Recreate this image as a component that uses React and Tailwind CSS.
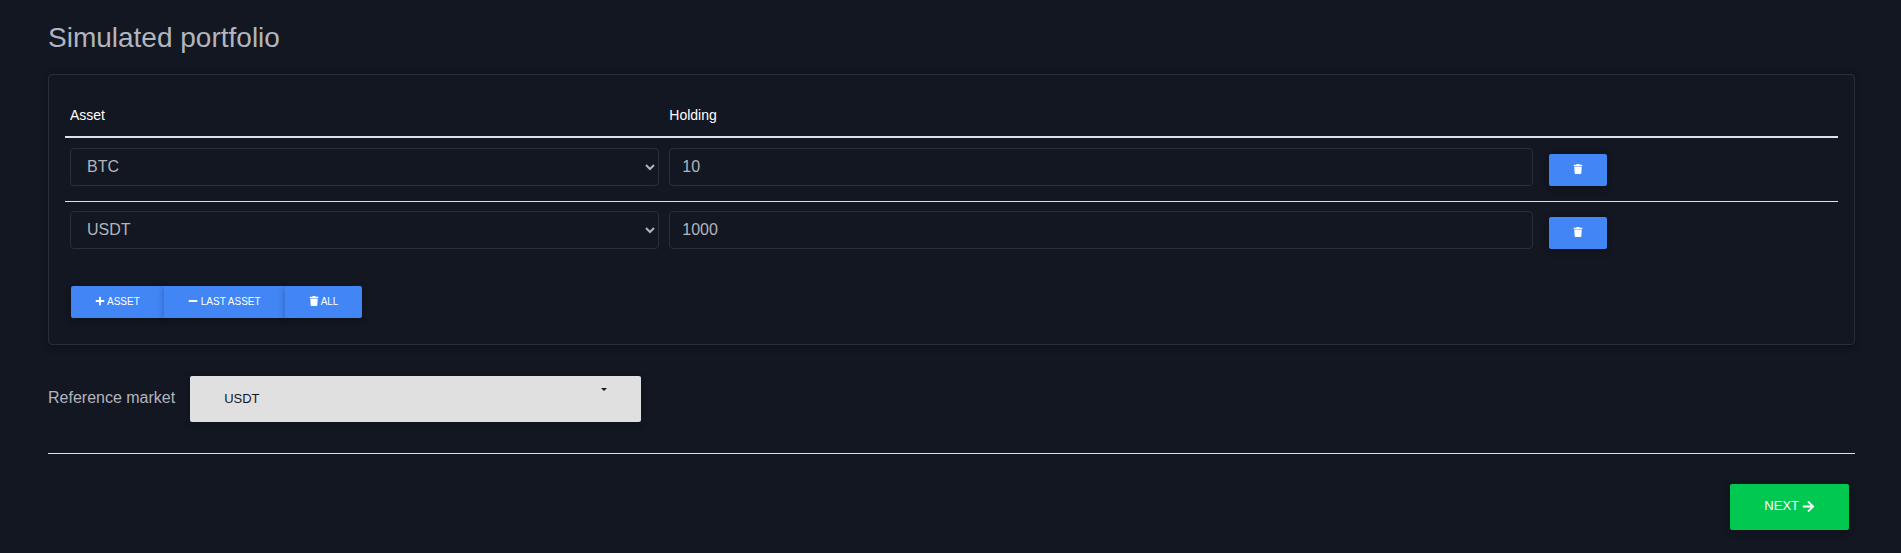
import React, { useState } from 'react';
import { FaArrowRight, FaMinus, FaPlus, FaTrash } from 'react-icons/fa';

const SYMBOLS = ['BTC', 'ETH', 'USDT'];

const RAISED = 'shadow-[0_2px_5px_rgba(0,0,0,0.16),0_2px_10px_rgba(0,0,0,0.12)]';

const SmallButton = ({ className = '', children, ...props }) => (
    <button
        type="button"
        className={`${RAISED} flex h-8 items-center justify-center bg-[#4285f4] px-6 pb-0.5 text-[10px] uppercase text-white hover:bg-[#5a95f5] ${className}`}
        {...props}
    >
        {children}
    </button>
);

const AssetRow = ({ row, first, onChange, onRemove }) => {
    const cell = `h-[63px] border-t px-[5px] pt-[9px] align-top ${
        first ? 'border-transparent' : 'border-[#dee2e6]'
    }`;

    return (
        <tr>
            <td className={cell}>
                <select
                    aria-label="Asset"
                    value={row.asset}
                    onChange={(e) => onChange({ ...row, asset: e.target.value })}
                    className="block h-[38px] w-full rounded border border-[#2a2e39] bg-[#131722] px-3 pb-0.5 text-base text-[#b2b5be]"
                >
                    {SYMBOLS.map((symbol) => (
                        <option key={symbol}>{symbol}</option>
                    ))}
                </select>
            </td>
            <td className={cell}>
                <input
                    aria-label="Holding"
                    type="text"
                    inputMode="decimal"
                    value={row.holding}
                    onChange={(e) => onChange({ ...row, holding: e.target.value })}
                    className="block h-[38px] w-full rounded border border-[#2a2e39] bg-[#131722] px-3 text-base text-[#b2b5be]"
                />
            </td>
            <td className={cell}>
                <SmallButton aria-label="Remove asset" className="mx-1.5 mt-1.5 rounded-xs" onClick={onRemove}>
                    <FaTrash />
                </SmallButton>
            </td>
        </tr>
    );
};

const App = () => {
    const [rows, setRows] = useState([
        { id: 1, asset: 'BTC', holding: '10' },
        { id: 2, asset: 'USDT', holding: '1000' }
    ]);
    const [market, setMarket] = useState('USDT');

    const addRow = () => {
        setRows(prev => [...prev, { id: Date.now(), asset: 'BTC', holding: '0' }]);
    };

    const updateRow = (next) => {
        setRows(prev => prev.map(row => (row.id === next.id ? next : row)));
    };

    return (
        <div className="min-h-screen bg-[#131722] pt-[21px] pr-[46px] pb-5 pl-12 font-['Liberation_Sans',Arial,sans-serif] text-base text-[#b2b5be]">
            <h3 className="text-[28px] leading-[34px]">Simulated portfolio</h3>

            <div className={`${RAISED} mt-[19px] rounded border border-[#2a2e39] px-4 pt-[30px] pb-[26px]`}>
                <table className="w-full table-fixed border-separate border-spacing-0">
                    <thead>
                        <tr className="text-left text-sm text-white">
                            <th className="w-[33.8%] border-b-2 border-[#dee2e6] px-[5px] pb-[11px] font-normal">Asset</th>
                            <th className="w-[49.3%] border-b-2 border-[#dee2e6] px-[5px] pb-[11px] font-normal">Holding</th>
                            <th className="w-[16.9%] border-b-2 border-[#dee2e6]" />
                        </tr>
                    </thead>
                    <tbody>
                        {rows.map((row, i) => (
                            <AssetRow
                                key={row.id}
                                row={row}
                                first={i === 0}
                                onChange={updateRow}
                                onRemove={() => setRows(prev => prev.filter(r => r.id !== row.id))}
                            />
                        ))}
                    </tbody>
                </table>

                <div className="mx-1.5 mt-[22px] flex">
                    <SmallButton className="gap-0.5 rounded-l-xs" onClick={addRow}>
                        <FaPlus /> Asset
                    </SmallButton>
                    <SmallButton className="gap-[3px]" onClick={() => setRows(prev => prev.slice(0, -1))}>
                        <FaMinus /> Last asset
                    </SmallButton>
                    <SmallButton className="gap-0.5 rounded-r-xs" onClick={() => setRows([])}>
                        <FaTrash /> All
                    </SmallButton>
                </div>
            </div>

            <div className="mt-[31px] flex items-center gap-[15px]">
                <label htmlFor="market" className="pb-0.5">Reference market</label>
                <div className="relative">
                    <select
                        id="market"
                        value={market}
                        onChange={(e) => setMarket(e.target.value)}
                        className={`${RAISED} block h-[46px] w-[451px] appearance-none rounded-xs bg-[#e0e0e0] px-[34px] text-[13px] text-[#131722]`}
                    >
                        {SYMBOLS.map((symbol) => (
                            <option key={symbol}>{symbol}</option>
                        ))}
                    </select>
                    <span className="pointer-events-none absolute top-3 right-[34px] border-x-[3px] border-t-[3px] border-x-transparent border-t-[#131722]" />
                </div>
            </div>

            <hr className="mt-[31px] border-[#dee2e6]" />

            <div className="mt-[30px] mr-1.5 flex justify-end">
                <button
                    type="button"
                    className={`${RAISED} flex h-[46px] items-center gap-[3px] rounded-xs bg-[#00c851] px-[34px] pb-0.5 text-[13px] uppercase text-white hover:bg-[#00d255]`}
                >
                    Next <FaArrowRight />
                </button>
            </div>
        </div>
    );
};

export default App;
